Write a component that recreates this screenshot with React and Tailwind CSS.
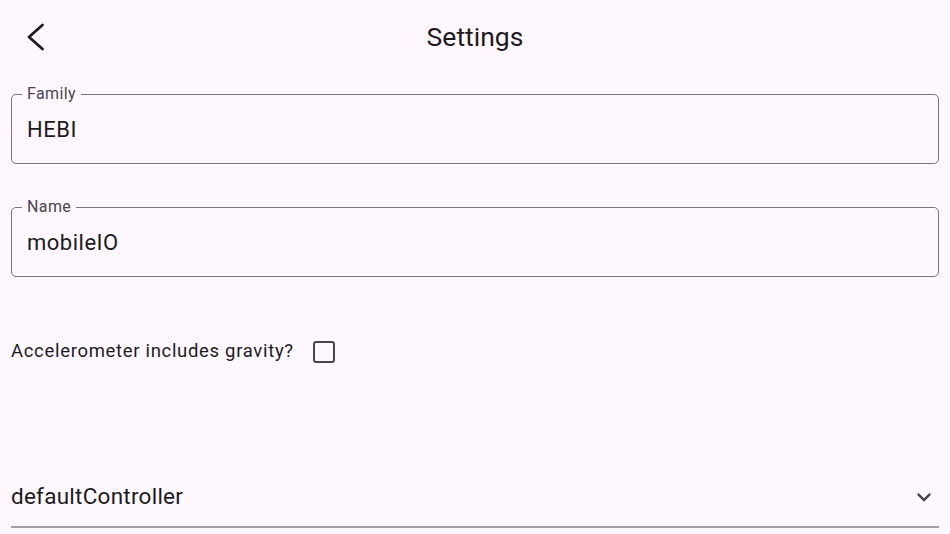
import React, { useState } from 'react';

const font = { fontFamily: 'Roboto, "Noto Sans", sans-serif' };

const OutlinedField = ({ label, value, className }) => (
    <fieldset className={`h-[80px] rounded-[5px] border border-[#79747e] px-[15px] pb-0 ${className}`}>
        <legend className="ml-[-5px] px-[5px] text-[16px] leading-[20px] tracking-[0.4px] text-[#49454f]">{label}</legend>
        <div className="pt-[13px] text-[22px] leading-[26px] tracking-[0.5px] text-[#1d1b20]">{value}</div>
    </fieldset>
);

export default function App() {
    const [gravity, setGravity] = useState(false);

    return (
        <div className="min-h-screen w-full overflow-hidden bg-[#fef7ff] px-[11px]" style={font}>
            <header className="grid h-[74px] grid-cols-[1fr_auto_1fr] items-center">
                <button className="ml-[2px] flex h-[48px] w-[48px] items-center justify-center">
                    <svg width="24" height="28" viewBox="0 0 24 28" fill="none">
                        <polyline points="17.5,2 4,14 17.5,26" stroke="#1d1b20" strokeWidth="2.8" strokeLinecap="round" strokeLinejoin="round" />
                    </svg>
                </button>
                <h1 className="text-[26.5px] leading-[32px] text-[#1d1b20]">Settings</h1>
                <div />
            </header>

            <OutlinedField label="Family" value="HEBI" className="mt-[10px]" />
            <OutlinedField label="Name" value="mobileIO" className="mt-[33px]" />

            <div className="mt-[51px] flex h-[48px] items-center gap-[19px]">
                <span className="text-[18.5px] tracking-[0.68px] text-[#1d1b20]">Accelerometer includes gravity?</span>
                <button
                    onClick={() => setGravity((g) => !g)}
                    className="h-[22px] w-[22px] rounded-[3px] border-2 border-[#49454f]"
                />
            </div>

            <div className="mt-[90px] flex h-[62px] items-center justify-between border-b-2 border-[#a39ea8] pt-[1px]">
                <span className="text-[22.5px] tracking-[0.25px] text-[#1d1b20]">defaultController</span>
                <svg width="28" height="28" viewBox="0 0 24 24" className="mr-px">
                    <path d="M16.59 8.59L12 13.17 7.41 8.59 6 10l6 6 6-6z" fill="#49454f" />
                </svg>
            </div>
        </div>
    );
}
